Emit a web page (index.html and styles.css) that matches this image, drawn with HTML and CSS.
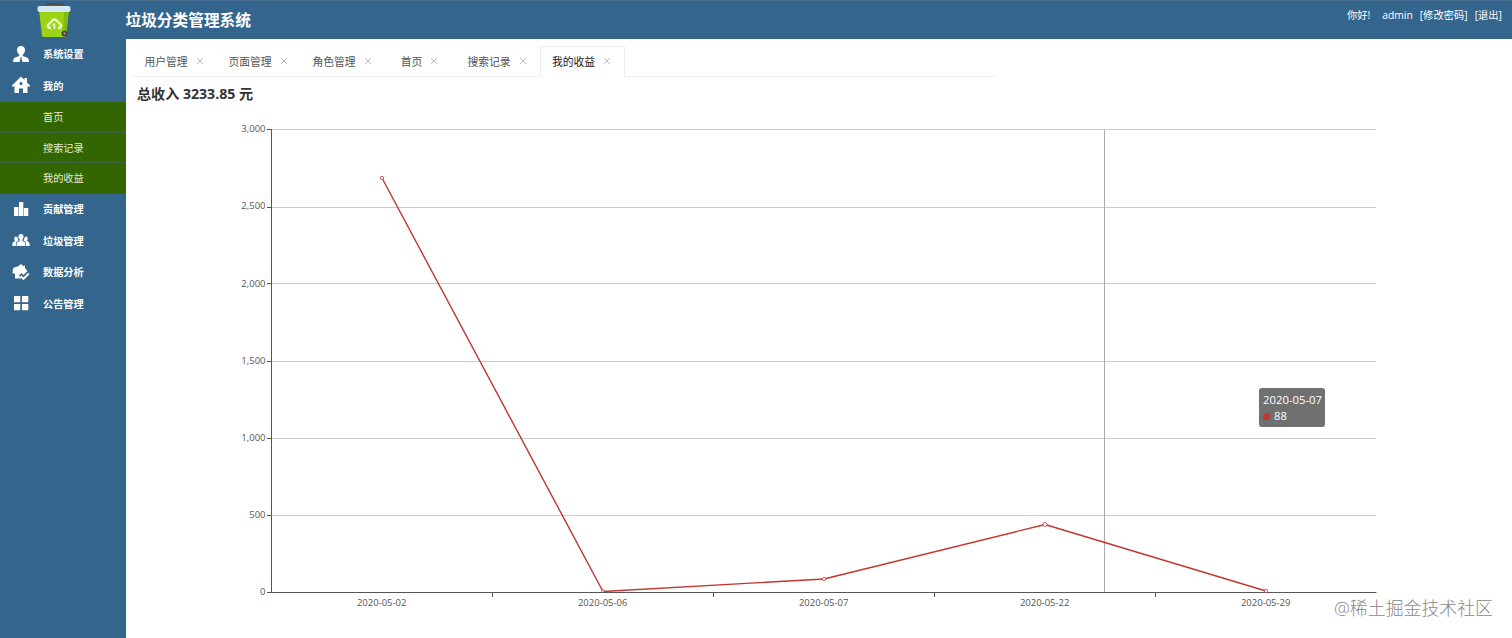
FILE: index.html
```html
<!DOCTYPE html>
<html lang="zh-CN">
<head>
    <meta charset="UTF-8">
    <meta name="viewport" content="width=device-width, initial-scale=1.0">
    <title>垃圾分类管理系统</title>
    <link rel="stylesheet" href="styles.css">
</head>
<body>

<header class="header">
    <div class="logo">
        <svg width="36" height="38" viewBox="0 0 36 38">
            <path d="M10 5 L12 3 L26 3 L28 5" fill="none" stroke="#554e4b" stroke-width="2"/>
            <path d="M3 9 H33 L30 35 Q30 36 28 36 H8 Q6 36 6 35 Z" fill="#9bd414"/>
            <path d="M28 9 H33 L30 35 Q30 36 28 36 H27 Z" fill="#80bc12"/>
            <rect x="1.5" y="5" width="33" height="6" rx="2" fill="#d3e9f3"/>
            <path d="M15 27 H13.500 Q11 26 12.500 23.500 L16.500 19.500 Q18.500 17.500 20.500 19.500 L24.500 23.500 Q26 26 23.500 27 H22" fill="none" stroke="#eefad0" stroke-width="2.300"/>
            <path d="M18.500 22.500 V28 M18.500 22.500 L16.500 25" fill="none" stroke="#eefad0" stroke-width="1.500"/>
            <circle cx="28.500" cy="32.500" r="3" fill="#4f4240"/>
            <circle cx="28.500" cy="32.500" r="1" fill="#c9a59b"/>
        </svg>
    </div>
    <h1>垃圾分类管理系统</h1>
    <div class="user">
        <span class="hello">你好!</span>
        <span class="name">admin</span>
        <a>[修改密码]</a>
        <a>[退出]</a>
    </div>
</header>

<div class="wrapper">
    <nav class="sidebar">
        <div class="item">
            <svg width="18" height="18" viewBox="0 0 18 18"><path d="M9 1C6.600 1 5 2.600 5 5C5 7 6 8.700 7.300 9.700V11L2.500 12.800Q1 13.500 1 17H7.500L8.500 13.500L8 12.500H10L9.500 13.500L10.500 17H17Q17 13.500 15.500 12.800L10.700 11V9.700C12 8.700 13 7 13 5C13 2.600 11.400 1 9 1Z"/></svg>
            <span>系统设置</span>
        </div>
        <div class="item">
            <svg width="18" height="18" viewBox="0 0 18 18"><path fill-rule="evenodd" d="M9 .6L12.500 4V2H15V6.500L18 9.500V10.500H15.500V17H11V12.500H7V17H2.500V10.500H0V9.500ZM9 6A1.600 1.600 0 1 0 9 9.200A1.600 1.600 0 1 0 9 6Z"/></svg>
            <span>我的</span>
        </div>
        <div class="submenu">
            <a>首页</a>
            <a>搜索记录</a>
            <a>我的收益</a>
        </div>
        <div class="item">
            <svg width="18" height="18" viewBox="0 0 18 18"><path d="M2 7H6.500V16H2ZM7 2H11.300V16H7ZM11.800 8H16.300V16H11.800Z"/></svg>
            <span>贡献管理</span>
        </div>
        <div class="item">
            <svg width="18" height="18" viewBox="0 0 18 18"><path d="M9 3C7 3 6 4.500 6.600 7L7.700 8.700V10L5 11.500L4.500 15H13.500L13 11.500L10.300 10V8.700L11.400 7C12 4.500 11 3 9 3Z"/><path d="M4 5.500C2.500 5.500 1.800 7 2.500 9L3 10L.7 11.500L.2 15H3.800L4.300 11L6.500 9.800L5.500 6.500ZM14 5.500C15.500 5.500 16.200 7 15.500 9L15 10L17.300 11.500L17.800 15H14.200L13.700 11L11.500 9.800L12.500 6.500Z"/></svg>
            <span>垃圾管理</span>
        </div>
        <div class="item">
            <svg width="18" height="18" viewBox="0 0 18 18"><path d="M3 4L6 3.500L9 1L11 3L13 2.500V5L15.500 8L13 10.500L11.500 12L9.500 10L7 12.500L9.500 15.500H3V11L.5 10L1 5.500Z"/><path d="M8.800 13L11.500 15.800L16.800 10.500" fill="none" stroke="#fff" stroke-width="1.900"/></svg>
            <span>数据分析</span>
        </div>
        <div class="item">
            <svg width="18" height="18" viewBox="0 0 18 18"><path d="M2 2H8.300V8.300H2ZM10 2H16.300V8.300H10ZM2 10H8.300V16.300H2ZM10 10H16.300V16.300H10Z"/></svg>
            <span>公告管理</span>
        </div>
    </nav>

    <main class="content">
        <div class="tabs">
            <div class="tab">用户管理<svg class="close" viewBox="0 0 8 8"><path d="M1 1L7 7M7 1L1 7"/></svg></div>
            <div class="tab">页面管理<svg class="close" viewBox="0 0 8 8"><path d="M1 1L7 7M7 1L1 7"/></svg></div>
            <div class="tab">角色管理<svg class="close" viewBox="0 0 8 8"><path d="M1 1L7 7M7 1L1 7"/></svg></div>
            <div class="tab short">首页<svg class="close" viewBox="0 0 8 8"><path d="M1 1L7 7M7 1L1 7"/></svg></div>
            <div class="tab">搜索记录<svg class="close" viewBox="0 0 8 8"><path d="M1 1L7 7M7 1L1 7"/></svg></div>
            <div class="tab active">我的收益<svg class="close" viewBox="0 0 8 8"><path d="M1 1L7 7M7 1L1 7"/></svg></div>
        </div>

        <h2>总收入 3233.85 元</h2>

        <div class="chart">
            <svg width="1386" height="528" viewBox="126 110 1386 528">
                <!-- 网格线 -->
                <path class="grid" d="M272 129.500H1376M272 207.500H1376M272 283.500H1376M272 361.500H1376M272 438.500H1376M272 515.500H1376"/>
                <path class="pointer" d="M1104.500 130V592"/>
                <!-- 坐标轴 -->
                <path class="axis" d="M271.500 129V593M267 592.500H1376.500M267 129.500H271M267 207.500H271M267 283.500H271M267 361.500H271M267 438.500H271M267 515.500H271M492.500 593V597M713.500 593V597M934.500 593V597M1155.500 593V597"/>
                <g class="label y">
                    <text x="265.500" y="132">3,000</text>
                    <text x="265.500" y="209">2,500</text>
                    <text x="265.500" y="286.500">2,000</text>
                    <text x="265.500" y="364">1,500</text>
                    <text x="265.500" y="441">1,000</text>
                    <text x="265.500" y="518">500</text>
                    <text x="265.500" y="595">0</text>
                </g>
                <g class="label x">
                    <text x="381.700" y="606">2020-05-02</text>
                    <text x="602.700" y="606">2020-05-06</text>
                    <text x="823.700" y="606">2020-05-07</text>
                    <text x="1044.700" y="606">2020-05-22</text>
                    <text x="1265.700" y="606">2020-05-29</text>
                </g>
                <!-- 收益折线 -->
                <polyline class="line" points="382,178 603,591.500 824,579 1045,524.500 1266,591"/>
                <g class="dot">
                    <circle cx="382" cy="178" r="1.700"/>
                    <path d="M601.300 591.500A1.700 1.700 0 0 1 604.700 591.500"/>
                    <circle cx="824" cy="579" r="1.700"/>
                    <circle cx="1045" cy="524.500" r="2"/>
                    <circle cx="1266" cy="591" r="1.700"/>
                </g>
            </svg>
            <div class="tooltip">
                <div>2020-05-07</div>
                <div class="value"><i></i>88</div>
            </div>
            <div class="watermark">@稀土掘金技术社区</div>
        </div>
    </main>
</div>

</body>
</html>
```
FILE: styles.css
```css
* {
    box-sizing: border-box;
}
body {
    margin: 0;
    height: 638px;
    overflow: hidden;
    font-family: "Open Sans", "Noto Sans CJK SC", sans-serif;
    background-color: #fff;
}
.header {
    display: flex;
    height: 39px;
    background-color: #34658d;
    border-top: 1px solid #466f91;
    color: #fff;
}
.logo {
    width: 125.5px;
    padding-left: 36px;
}
.logo svg {
    display: block;
}
h1 {
    margin: 0;
    font-size: 15.7px;
    line-height: 38px;
    font-weight: bold;
}
.user {
    display: flex;
    margin-left: auto;
    padding-right: 10px;
    font-size: 10.3px;
    line-height: 29px;
}
.hello {
    margin-right: 12px;
}
.user a {
    margin-left: 7px;
}
.wrapper {
    display: flex;
    height: 599px;
}
.sidebar {
    width: 126px;
    background-color: #34658d;
}
.item {
    display: flex;
    align-items: center;
    gap: 13px;
    height: 31.5px;
    padding: 0 0 2px 12px;
    color: #fff;
    font-size: 10.2px;
    font-weight: bold;
}
.item svg {
    fill: #fff;
}
.submenu a {
    display: block;
    height: 30.6px;
    padding-left: 43px;
    border-bottom: 1px solid #3b6540;
    background-color: #336600;
    color: #e4ecdc;
    font-size: 10.2px;
    line-height: 30px;
}
.submenu a:last-child {
    border-bottom: none;
}
.content {
    flex: 1;
}
.tabs {
    display: flex;
    width: 864px;
    height: 38px;
    margin-left: 6px;
    padding: 7px 0 0 1px;
    border-bottom: 1px solid #eee;
}
.tab {
    display: flex;
    align-items: center;
    justify-content: center;
    gap: 8px;
    width: 84px;
    height: 31px;
    padding: 0 2px 2px 0;
    border: 1px solid transparent;
    color: #555;
    font-size: 10.8px;
}
.tab.short {
    width: 71px;
}
.tab.active {
    width: 85px;
    border-color: #eee;
    border-bottom-color: #fff;
    color: #222;
}
.close {
    width: 8px;
    height: 8px;
    fill: none;
    stroke: #bbb;
}
h2 {
    margin: 0;
    padding-left: 11px;
    color: #333;
    font-size: 14.1px;
    line-height: 33px;
    font-weight: bold;
}
.chart {
    position: relative;
}
.chart svg {
    display: block;
}
.grid {
    stroke: #ccc;
}
.pointer {
    stroke: #aaa;
}
.axis {
    fill: none;
    stroke: #555;
}
.label {
    fill: #555;
    font-size: 9.5px;
}
.label.y {
    text-anchor: end;
}
.label.x {
    text-anchor: middle;
}
.line {
    fill: none;
    stroke: #c23531;
    stroke-width: 1.4;
    stroke-linejoin: bevel;
}
.dot {
    fill: #fff;
    stroke: #c23531;
    stroke-width: 0.8;
}
.tooltip {
    position: absolute;
    left: 1133px;
    top: 278px;
    width: 66px;
    height: 39px;
    padding: 4px;
    border-radius: 3px;
    background-color: #707070;
    color: #fff;
    font-size: 11.3px;
    line-height: 16px;
    white-space: nowrap;
}
.value {
    display: flex;
    align-items: center;
    gap: 4px;
}
.value i {
    width: 7px;
    height: 7px;
    border-radius: 50%;
    background-color: #c23531;
}
.watermark {
    position: absolute;
    right: 19px;
    top: 486px;
    color: #888;
    font-size: 17.9px;
    font-weight: 300;
    line-height: 24px;
}
```
